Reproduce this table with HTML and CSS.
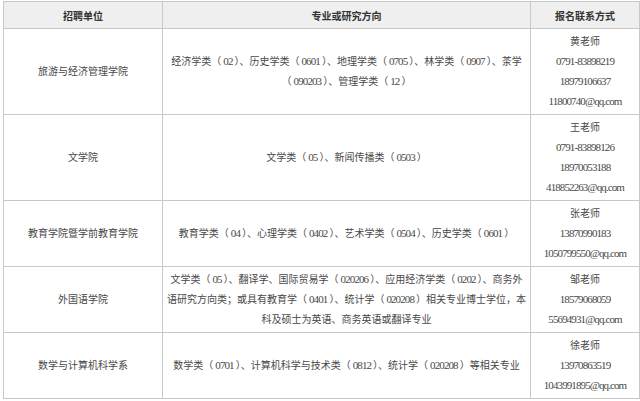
FILE: index.html
```html
<!DOCTYPE html>
<html lang="zh">
<head>
<meta charset="utf-8">
<title>招聘单位</title>
<link rel="stylesheet" href="styles.css">
</head>
<body>
<div class="wrap">
<table class="jobs">
<colgroup><col class="c1"><col class="c2"><col class="c3"></colgroup>
<thead>
<tr><th>招聘单位</th><th>专业或研究方向</th><th>报名联系方式</th></tr>
</thead>
<tbody>
<tr>
<td>旅游与经济管理学院</td>
<td>经济学类（<span class="n">02</span>）、历史学类（<span class="n">0601</span>）、地理学类（<span class="n">0705</span>）、林学类（<span class="n">0907</span>）、茶学<br>（<span class="n">090203</span>）、管理学类（<span class="n">12</span>）</td>
<td>黄老师<br><span class="n">0791-83898219</span><br><span class="n">18979106637</span><br><span class="n">11800740@qq.com</span></td>
</tr>
<tr>
<td>文学院</td>
<td>文学类（<span class="n">05</span>）、新闻传播类（<span class="n">0503</span>）</td>
<td>王老师<br><span class="n">0791-83898126</span><br><span class="n">18970053188</span><br><span class="n">418852263@qq.com</span></td>
</tr>
<tr>
<td>教育学院暨学前教育学院</td>
<td>教育学类（<span class="n">04</span>）、心理学类（<span class="n">0402</span>）、艺术学类（<span class="n">0504</span>）、历史学类（<span class="n">0601</span>）</td>
<td>张老师<br><span class="n">13870990183</span><br><span class="n">1050799550@qq.com</span></td>
</tr>
<tr>
<td>外国语学院</td>
<td>文学类（<span class="n">05</span>）、翻译学、国际贸易学（<span class="n">020206</span>）、应用经济学类（<span class="n">0202</span>）、商务外<br>语研究方向类；或具有教育学（<span class="n">0401</span>）、统计学（<span class="n">020208</span>）相关专业博士学位，本<br>科及硕士为英语、商务英语或翻译专业</td>
<td>邹老师<br><span class="n">18579068059</span><br><span class="n">55694931@qq.com</span></td>
</tr>
<tr>
<td>数学与计算机科学系</td>
<td>数学类（<span class="n">0701</span>）、计算机科学与技术类（<span class="n">0812</span>）、统计学（<span class="n">020208</span>）等相关专业</td>
<td>徐老师<br><span class="n">13970863519</span><br><span class="n">1043991895@qq.com</span></td>
</tr>
</tbody>
</table>
</div>
</body>
</html>
```

FILE: styles.css
```css
html, body {
  margin: 0;
  padding: 0;
  background: #ffffff;
}

.wrap {
  padding: 1px 2px 0 3px;
}

.jobs {
  width: 636px;
  table-layout: fixed;
  border-collapse: collapse;
  font-family: "Noto Sans CJK SC", "Noto Sans", sans-serif;
  font-size: 10px;
  color: #484848;
}

.c1 { width: 159px; }
.c2 { width: 368px; }
.c3 { width: 109px; }

.jobs th,
.jobs td {
  border: 1px solid #c8c8c8;
  text-align: center;
  vertical-align: middle;
  line-height: 20px;
  padding: 2px 4px 3px;
  white-space: nowrap;
}

.jobs th {
  background: #efefef;
  color: #333333;
  font-weight: bold;
  padding: 3px 4px 2px;
  line-height: 21px;
}

.n {
  font-family: "Liberation Serif", "DejaVu Serif", serif;
  font-size: 11px;
  letter-spacing: -0.9px;
  line-height: 1;
  padding: 0 2px;
}
```
